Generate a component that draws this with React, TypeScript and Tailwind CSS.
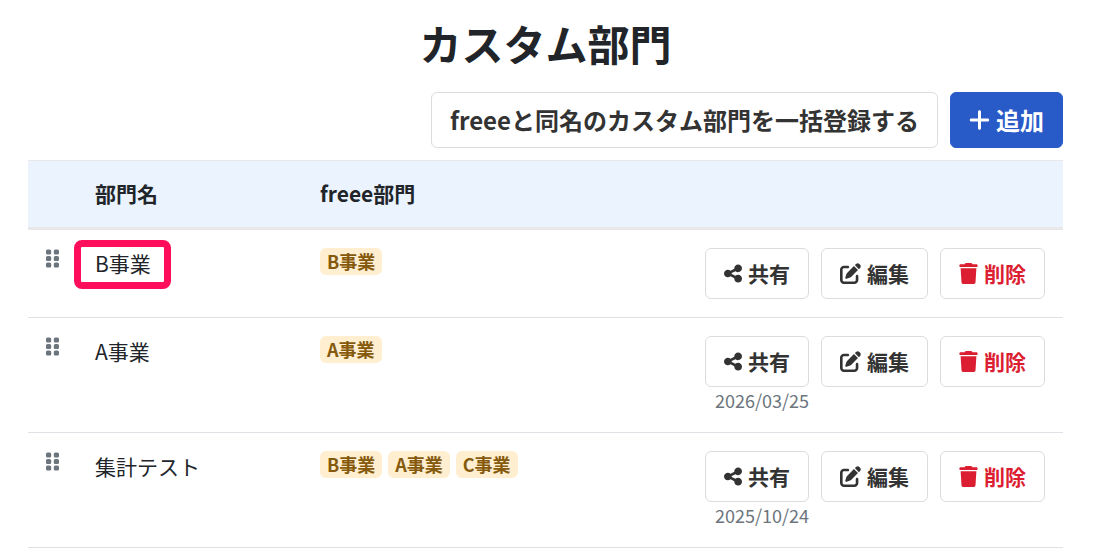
import React from 'react';
import { FaGripVertical, FaPenToSquare, FaPlus, FaShareNodes, FaTrash } from 'react-icons/fa6';

interface Department {
  name: string;
  freeeDepartments: string[];
  sharedUntil?: string;
  highlighted?: boolean;
}

const departments: Department[] = [
  { name: 'B事業', freeeDepartments: ['B事業'], highlighted: true },
  { name: 'A事業', freeeDepartments: ['A事業'], sharedUntil: '2026/03/25' },
  { name: '集計テスト', freeeDepartments: ['B事業', 'A事業', 'C事業'], sharedUntil: '2025/10/24' },
];

interface ActionButtonProps {
  icon: React.ReactNode;
  label: string;
  danger?: boolean;
}

const ActionButton: React.FC<ActionButtonProps> = ({ icon, label, danger }) => (
  <button
    type="button"
    className={`flex h-[51px] items-center gap-1.5 whitespace-nowrap rounded-md border border-[#dcdcdc] bg-white px-[18px] text-[21px] font-bold ${
      danger ? 'text-[#dc1e32]' : 'text-[#333333]'
    }`}
  >
    {icon}
    <span>{label}</span>
  </button>
);

const DepartmentRow: React.FC<{ department: Department }> = ({ department }) => (
  <tr>
    <td className="border-b border-[#dee2e6] px-[18px] py-[18px] align-top">
      <button type="button" aria-label="並び替え" className="block cursor-move text-[#6c757d]">
        <FaGripVertical className="h-[21px] w-[13px]" />
      </button>
    </td>
    <td className="border-b border-[#dee2e6] px-[18px] py-[18px] align-top leading-[30px]">
      <span className="relative inline-block">
        {department.name}
        {department.highlighted && (
          <span className="absolute -bottom-[11px] -left-[21px] -right-5 -top-2 rounded-lg border-[7px] border-[#ff0f5b]" />
        )}
      </span>
    </td>
    <td className="border-b border-[#dee2e6] px-[18px] py-[18px] align-top">
      <div className="flex flex-wrap gap-1.5">
        {department.freeeDepartments.map(name => (
          <span
            key={name}
            className="rounded-md bg-[#ffefd0] px-[7px] text-[18px] font-bold leading-[27px] text-[#855a0d]"
          >
            {name}
          </span>
        ))}
      </div>
    </td>
    <td className="border-b border-[#dee2e6] px-[18px] py-[18px] align-top">
      <div className="flex items-start justify-end gap-3">
        <div className="flex flex-col items-end">
          <ActionButton icon={<FaShareNodes className="h-[21px] w-[18px]" />} label="共有" />
          {department.sharedUntil && (
            <span className="text-[18px] leading-[27px] text-[#6c757d]">{department.sharedUntil}</span>
          )}
        </div>
        <ActionButton icon={<FaPenToSquare className="size-[21px]" />} label="編集" />
        <ActionButton icon={<FaTrash className="h-[21px] w-[19px]" />} label="削除" danger />
      </div>
    </td>
  </tr>
);

const App: React.FC = () => {
  return (
    <main className="bg-white pl-7 pr-[35px] pt-[18px] font-['Noto_Sans_CJK_JP',sans-serif] text-[21px] text-[#212529]">
      <h1 className="text-center text-[42px] font-bold leading-[50px]">カスタム部門</h1>

      <div className="mt-6 flex justify-end gap-3">
        <button
          type="button"
          className="h-14 rounded-md border border-[#dcdcdc] bg-white px-[18px] text-2xl font-bold text-[#333333]"
        >
          freeeと同名のカスタム部門を一括登録する
        </button>
        <button
          type="button"
          className="flex h-14 items-center gap-1.5 rounded-md border border-[#285ac8] bg-[#285ac8] px-[18px] text-2xl font-bold text-white"
        >
          <FaPlus className="h-6 w-[21px]" />
          <span>追加</span>
        </button>
      </div>

      <table className="mt-3 w-full border-separate border-spacing-0 text-left">
        <thead className="bg-[#ebf3ff]">
          <tr className="leading-8">
            <th className="w-[49px] border-b-[3px] border-t border-[#e9e7e7]" />
            <th className="w-[225px] border-b-[3px] border-t border-[#e9e7e7] px-[18px] pb-[18px] pt-4 font-bold">
              部門名
            </th>
            <th className="border-b-[3px] border-t border-[#e9e7e7] px-[18px] pb-[18px] pt-4 font-bold">
              freee部門
            </th>
            <th className="border-b-[3px] border-t border-[#e9e7e7]" />
          </tr>
        </thead>
        <tbody>
          {departments.map(department => (
            <DepartmentRow key={department.name} department={department} />
          ))}
        </tbody>
      </table>
    </main>
  );
};

export default App;
